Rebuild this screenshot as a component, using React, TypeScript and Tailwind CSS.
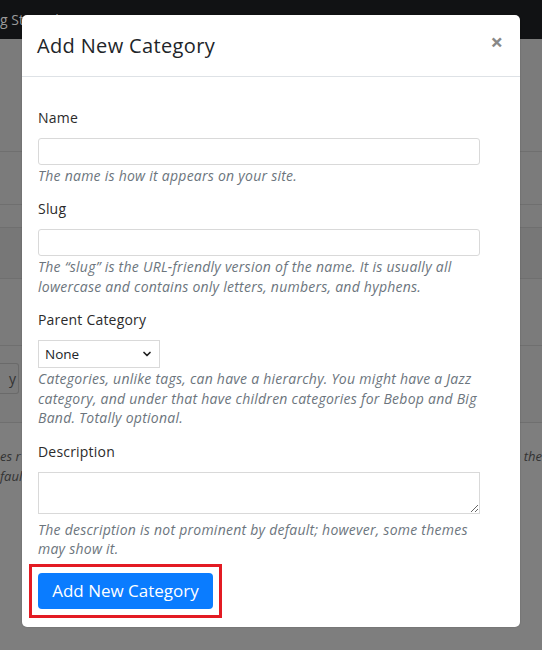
import { ChevronDown } from 'lucide-react'

const font = { fontFamily: '"Open Sans", "Noto Sans", sans-serif' }

function Field({ label, children, help, gap = 'mt-[1px]' }: { label: string; children: React.ReactNode; help: React.ReactNode; gap?: string }) {
  return (
    <div className="mb-[14px]">
      <label className="block text-[14px] tracking-[0.2px] text-[#2b2b2b] mb-[11px] leading-[19px]">{label}</label>
      {children}
      <p className={`max-w-[442px] text-[14px] tracking-[0.25px] italic text-[#6c757d] leading-[19.5px] ${gap}`}>{help}</p>
    </div>
  )
}

export default function App() {
  return (
    <div className="relative h-[650px] w-[542px] overflow-hidden bg-[#7b7b7b]" style={font}>
      {/* page behind the overlay */}
      <div className="h-[39px] bg-[#111214] text-[#9a9a9a] text-[14px] leading-[39px]">g Started</div>
      <div className="h-[112px]" />
      <div className="h-[53px] border-t border-[#6f6f6f]" />
      <div className="h-[23px] border-t border-[#6f6f6f]" />
      <div className="h-[51px] border-t border-[#6f6f6f] bg-[#777]" />
      <div className="h-[67px] border-t border-[#6f6f6f]" />
      <div className="h-[77px] border-t border-[#6f6f6f] pt-[17px]">
        <div className="h-[31px] w-[19px] border border-l-0 border-[#6a6a6a] rounded-r-[3px] text-[14px] text-[#333] flex items-center justify-end pr-[2px]">y</div>
      </div>
      <div className="border-t border-[#6f6f6f] bg-[#7e7e7e] h-[230px] pt-[23px] text-[13px] italic text-[#333] leading-[20px]">
        <div className="flex justify-between"><span>es r</span><span>o the</span></div>
        <div>faul</div>
      </div>

      {/* modal */}
      <div className="absolute left-[22px] top-[15px] w-[498px] h-[612px] bg-white rounded-[5px] shadow-[0_0_2px_rgba(0,0,0,0.2)]">
        <div className="h-[62px] border-b border-[#dee2e6] flex items-center justify-between pl-[15px] pr-[17px]">
          <h5 className="text-[20px] tracking-[0.35px] text-[#212529] leading-[24px] pt-[1px]">Add New Category</h5>
          <span className="text-[22px] font-bold text-[#888] leading-none -mt-[9px]">×</span>
        </div>
        <div className="pt-[30.5px] px-[16px]">
          <Field label="Name" help="The name is how it appears on your site.">
            <input className="block w-[442px] h-[27px] border border-[#d9d9d9] rounded-[3px] outline-none" />
          </Field>
          <Field label="Slug" help={<>The “slug” is the URL-friendly version of the name. It is usually all lowercase and contains only letters, numbers, and hyphens.</>}>
            <input className="block w-[442px] h-[27px] border border-[#d9d9d9] rounded-[3px] outline-none" />
          </Field>
          <Field label="Parent Category" help="Categories, unlike tags, can have a hierarchy. You might have a Jazz category, and under that have children categories for Bebop and Big Band. Totally optional.">
            <div className="flex items-center justify-between w-[122px] h-[28px] border border-[#d9d9d9] pl-[6px] pr-[6px] text-[13.5px] text-[#212529]">
              <span>None</span>
              <ChevronDown size={12} strokeWidth={3.5} className="text-[#222]" />
            </div>
          </Field>
          <Field label="Description" gap="mt-[6px]" help="The description is not prominent by default; however, some themes may show it.">
            <textarea className="block w-[442px] h-[42px] border border-[#d9d9d9] outline-none resize-y" />
          </Field>
          <div className="-mt-[9px] -ml-[9px] w-[193px] h-[54px] border-[3px] border-[#e31b23] p-[6px]">
            <button className="w-[175px] h-[36px] bg-[#0a7cff] text-white text-[17px] font-medium rounded-[4px]">Add New Category</button>
          </div>
        </div>
      </div>
    </div>
  )
}
